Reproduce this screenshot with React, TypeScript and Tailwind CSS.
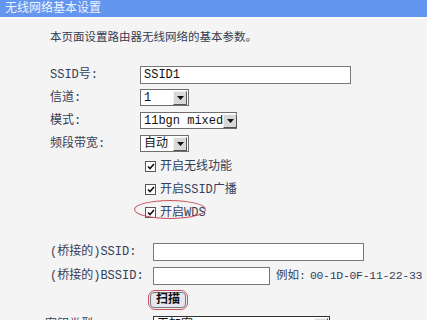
import React from 'react';

const FONT = { fontFamily: '"Liberation Mono", "Noto Sans CJK SC", monospace' };

function Arrow() {
  return (
    <span className="flex h-[14px] w-[14px] shrink-0 items-center justify-center border border-t-[#f4f4f4] border-l-[#f4f4f4] border-r-[#555] border-b-[#555] bg-[#d8d8d8]">
      <svg width="7" height="4" viewBox="0 0 7 4"><path d="M0 0h7L3.5 4z" fill="#111" /></svg>
    </span>
  );
}

function Select({ value, width }: { value: string; width: string }) {
  return (
    <div className={`flex h-[17px] items-center justify-between border border-[#6f6f6f] bg-white pl-[3px] pr-[1px] ${width}`}>
      <span className="whitespace-nowrap text-[12px] leading-none text-[#111]">{value}</span>
      <Arrow />
    </div>
  );
}

function Check() {
  return (
    <span className="flex h-[11px] w-[11px] shrink-0 items-center justify-center border border-[#555] bg-white">
      <svg width="8" height="7" viewBox="0 0 8 7"><path d="M1 3.5l2 2L7 1" stroke="#111" strokeWidth="1.6" fill="none" /></svg>
    </span>
  );
}

function Row({ label, lw = 'w-[90px]', children }: { label?: string; lw?: string; children: React.ReactNode }) {
  return (
    <div className="flex h-[23px] items-center">
      <span className={`shrink-0 whitespace-nowrap text-[12px] text-[#34405a] ${lw}`}>{label}</span>
      {children}
    </div>
  );
}

export default function App() {
  const checks = ['开启无线功能', '开启SSID广播', '开启WDS'];
  return (
    <div className="h-[320px] w-[427px] overflow-hidden bg-[#f4f4f4]" style={FONT}>
      {/* Header */}
      <div className="flex h-[17px] items-center bg-[#6396ee] pl-[5px] text-[12px] text-[#eef3ff]">无线网络基本设置</div>
      <div className="h-[2px] bg-[#fbfbfb]" />

      <div className="pl-[50px]">
        <p className="mt-[12px] text-[11.5px] leading-[14px] text-[#333c52]">本页面设置路由器无线网络的基本参数。</p>

        <div className="mt-[18px] flex flex-col">
          <Row label="SSID号:">
            <div className="flex h-[18px] w-[211px] items-center border border-[#777] bg-white pl-[3px] text-[12px] text-[#111]">SSID1</div>
          </Row>
          <Row label="信道:"><Select value="1" width="w-[49px]" /></Row>
          <Row label="模式:"><Select value="11bgn mixed" width="w-[97px]" /></Row>
          <Row label="频段带宽:"><Select value="自动" width="w-[49px]" /></Row>
          {checks.map((c, i) => (
            <Row key={c}>
              <div className="relative flex items-center gap-[4px] whitespace-nowrap pl-[5px] text-[12px] text-[#34405a]">
                <Check />
                <span>{c}</span>
                {i === 2 && (
                  <span className="absolute left-[-6px] top-[-4px] h-[19px] w-[72px] rounded-[50%] border border-[#c8505e]" />
                )}
              </div>
            </Row>
          ))}
        </div>

        <div className="mt-[16px] flex flex-col">
          <div className="flex h-[24px] items-center">
            <span className="w-[103px] shrink-0 whitespace-nowrap text-[12px] text-[#34405a]">(桥接的)SSID:</span>
            <div className="h-[18px] w-[211px] border border-[#777] bg-white" />
          </div>
          <div className="flex h-[24px] items-center">
            <span className="w-[103px] shrink-0 whitespace-nowrap text-[12px] text-[#34405a]">(桥接的)BSSID:</span>
            <div className="h-[18px] w-[117px] shrink-0 border border-[#777] bg-white" />
            <span className="ml-[6px] flex items-center whitespace-nowrap text-[11.5px] text-[#34405a]">
              <span>例如:</span>
              <span className="ml-[4px] tracking-[-0.3px]">00-1D-0F-11-22-33</span>
            </span>
          </div>
          <div className="flex h-[24px] items-center pl-[98px]">
            <div className="rounded-[7px] border border-[#c8505e] p-[1px]">
              <div className="flex h-[16px] w-[36px] items-center justify-center rounded-[4px] border border-[#777] bg-[#e6e6f0] text-[12px] font-bold text-[#111]">扫描</div>
            </div>
          </div>
          <div className="flex h-[24px] items-start pt-[4px]">
            <span className="-ml-[5px] w-[108px] shrink-0 whitespace-nowrap text-[12px] text-[#34405a]">密钥类型:</span>
            <div className="flex h-[18px] w-[177px] items-center justify-between border border-[#333] bg-white pl-[3px] pr-[1px]">
              <span className="text-[12px] text-[#111]">无加密</span>
              <Arrow />
            </div>
          </div>
        </div>
      </div>
    </div>
  );
}
